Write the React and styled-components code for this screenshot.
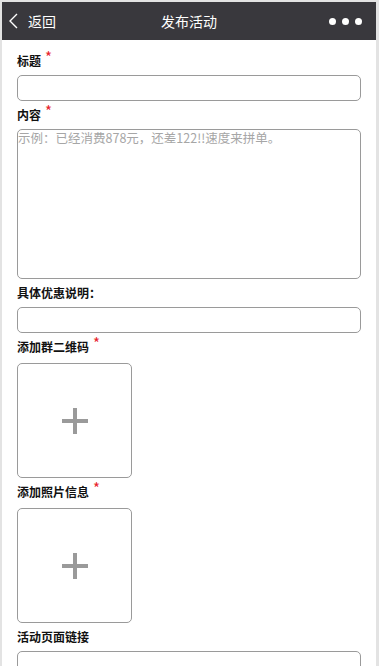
import React from "react";
import styled, { createGlobalStyle } from "styled-components";

const Global = createGlobalStyle`
  html, body { margin: 0; padding: 0; background: #fff; }
  body { font-family: "Noto Sans CJK SC", "Noto Sans", sans-serif; }
  * { box-sizing: border-box; }
`;

const Frame = styled.div`
  width: 379px;
  min-height: 666px;
  border-top: 2px solid #e3e3e3;
  border-left: 2px solid #e3e3e3;
  border-right: 3px solid #e3e3e3;
  background: #fff;
`;

const Header = styled.header`
  height: 38px;
  background: #39383d;
  color: #fff;
  display: grid;
  grid-template-columns: 1fr auto 1fr;
  align-items: center;
  padding: 0 10px;
`;

const Back = styled.div`
  display: flex;
  align-items: center;
  gap: 8px;
  font-size: 14px;
  margin-left: -4px;
`;

const Title = styled.div`
  font-size: 14px;
  text-align: center;
`;

const Dots = styled.div`
  justify-self: end;
  display: flex;
  gap: 6px;
  margin-right: 4px;
`;

const Dot = styled.span`
  width: 7px;
  height: 7px;
  border-radius: 50%;
  background: #fff;
`;

const Form = styled.div`
  padding: 12px 15px 0 15px;
  display: flex;
  flex-direction: column;
`;

const Label = styled.div`
  font-size: 12px;
  font-weight: 700;
  line-height: 18px;
  height: 18px;
  color: #111;
  margin-bottom: ${(p) => (p.$upload ? 7 : 5)}px;
`;

const Star = styled.span`
  color: #e8232b;
  font-size: 15px;
  line-height: 0;
  font-weight: 400;
  position: relative;
  top: -3px;
  margin-left: 4px;
`;

const Input = styled.div`
  width: 100%;
  height: 26px;
  border: 1px solid #9a9a9a;
  border-radius: 5px;
  margin-bottom: 5px;
`;

const TextArea = styled.div`
  width: 100%;
  height: 150px;
  border: 1px solid #9a9a9a;
  border-radius: 5px;
  margin-bottom: 5px;
  font-size: 12.5px;
  line-height: 16px;
  color: #a6a6a6;
`;

const Upload = styled.div`
  width: 115px;
  height: 115px;
  border: 1px solid #9a9a9a;
  border-radius: 5px;
  margin-bottom: 5px;
  display: flex;
  align-items: center;
  justify-content: center;
`;

const Plus = () => (
  <svg width="26" height="26" viewBox="0 0 26 26">
    <rect x="11" y="0" width="4" height="26" fill="#9a9a9a" />
    <rect x="0" y="11" width="26" height="4" fill="#9a9a9a" />
  </svg>
);

export default function App() {
  return (
    <>
      <Global />
      <Frame>
        <Header>
          <Back>
            <svg width="12" height="16" viewBox="0 0 12 16">
              <polyline points="9,1 2,8 9,15" fill="none" stroke="#fff" strokeWidth="1.4" />
            </svg>
            返回
          </Back>
          <Title>发布活动</Title>
          <Dots>
            <Dot />
            <Dot />
            <Dot />
          </Dots>
        </Header>
        <Form>
          <Label>标题<Star>*</Star></Label>
          <Input />
          <Label>内容<Star>*</Star></Label>
          <TextArea>示例：已经消费878元，还差122!!速度来拼单。</TextArea>
          <Label>具体优惠说明：</Label>
          <Input />
          <Label $upload>添加群二维码<Star>*</Star></Label>
          <Upload><Plus /></Upload>
          <Label $upload>添加照片信息<Star>*</Star></Label>
          <Upload><Plus /></Upload>
          <Label>活动页面链接</Label>
          <Input />
        </Form>
      </Frame>
    </>
  );
}
